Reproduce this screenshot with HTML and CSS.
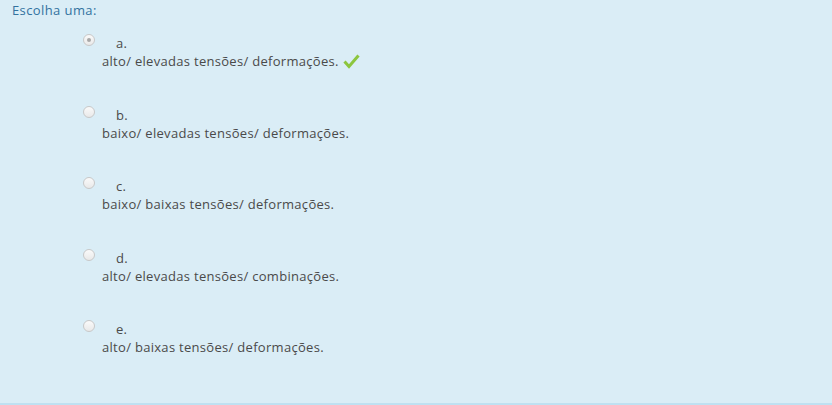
FILE: index.html
```html
<!DOCTYPE html>
<html lang="pt">
<head>
<meta charset="utf-8">
<link rel="stylesheet" href="styles.css">
</head>
<body>
<div class="panel">
  <div class="prompt">Escolha uma:</div>
  <div class="answers">
    <div class="option">
      <div class="head"><span class="radio checked"></span><span class="letter">a.</span></div>
      <div class="text">alto/ elevadas tensões/ deformações. <svg class="tick" width="17" height="15" viewBox="0 0 17 15"><path d="M1.5 7.5 L6 12.5 L15.5 1.5" fill="none" stroke="#8cc63e" stroke-width="3" stroke-linejoin="miter"/></svg></div>
    </div>
    <div class="option">
      <div class="head"><span class="radio"></span><span class="letter">b.</span></div>
      <div class="text">baixo/ elevadas tensões/ deformações.</div>
    </div>
    <div class="option">
      <div class="head"><span class="radio"></span><span class="letter">c.</span></div>
      <div class="text">baixo/ baixas tensões/ deformações.</div>
    </div>
    <div class="option">
      <div class="head"><span class="radio"></span><span class="letter">d.</span></div>
      <div class="text">alto/ elevadas tensões/ combinações.</div>
    </div>
    <div class="option">
      <div class="head"><span class="radio"></span><span class="letter">e.</span></div>
      <div class="text">alto/ baixas tensões/ deformações.</div>
    </div>
  </div>
</div>
</body>
</html>
```
FILE: styles.css
```css
html, body { margin: 0; padding: 0; }
body {
  width: 832px;
  height: 405px;
  overflow: hidden;
  font-family: "Open Sans", "DejaVu Sans", sans-serif;
  font-size: 13px;
  letter-spacing: 0.3px;
}
.panel {
  box-sizing: border-box;
  height: 405px;
  background: #daedf6;
  border-bottom: 2px solid #bfe0f1;
  padding: 2px 0 0 12px;
}
.prompt {
  color: #33729f;
  line-height: 16px;
  letter-spacing: 0.4px;
}
.answers {
  padding-left: 71px;
  padding-top: 16px;
}
.option {
  height: 71.5px;
}
.head {
  display: flex;
  align-items: flex-start;
  height: 18px;
}
.radio {
  box-sizing: border-box;
  width: 12px;
  height: 12px;
  border-radius: 50%;
  border: 1px solid #c8c8c8;
  background: linear-gradient(#fafafa, #e9e9e9);
  position: relative;
}
.radio.checked::after {
  content: "";
  position: absolute;
  left: 3px;
  top: 3px;
  width: 4px;
  height: 4px;
  border-radius: 50%;
  background: #a8a8a8;
}
.letter {
  margin-left: 21px;
  margin-top: 2px;
  color: #4a4a4a;
  line-height: 14px;
}
.text {
  margin-left: 19px;
  margin-top: 1px;
  color: #4a4a4a;
  line-height: 16px;
  display: flex;
  align-items: center;
  white-space: pre;
}
.tick { margin-left: 1px; margin-top: 1px; }
```
